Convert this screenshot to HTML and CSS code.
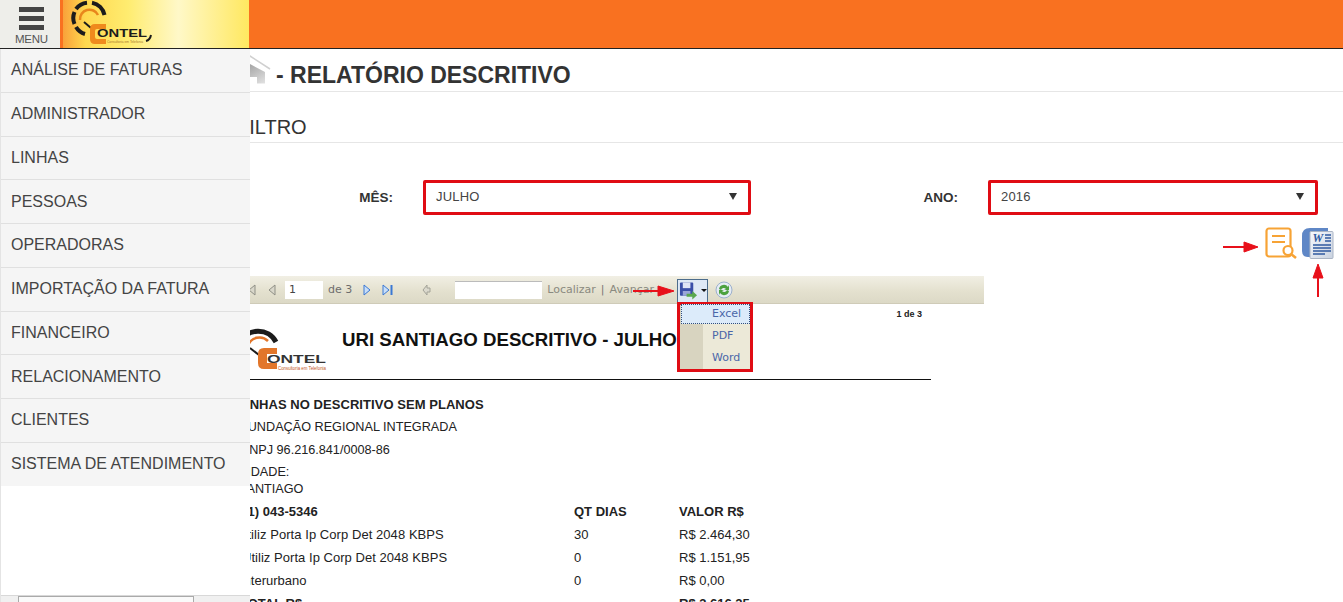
FILE: index.html
```html
<!DOCTYPE html>
<html lang="pt-BR">
  <head>
    <meta charset="UTF-8" />
    <title>Relatório Descritivo</title>
    <link rel="stylesheet" href="styles.css">
  </head>
  <body>
    <header class="topo">
      <div class="menu-btn">
        <span class="barra"></span>
        <span class="barra"></span>
        <span class="barra"></span>
        <small>MENU</small>
      </div>
      <div class="marca">
        <svg width="120" height="48" viewBox="0 0 120 48">
          <g fill="none" stroke="#1c1c1c" stroke-width="4">
            <path d="M11.500 24A15.500 15.500 0 0 1 11.500 12"/>
            <path d="M13 9A15.500 15.500 0 0 1 24 2.700"/>
            <path d="M29 2.700A15.500 15.500 0 0 1 41.500 15"/>
            <path d="M13 27A15.500 15.500 0 0 0 22 34"/>
          </g>
          <path d="M17 20A9.500 9.500 0 0 1 35 15" fill="none" stroke="#e8861c" stroke-width="2.500"/>
          <path d="M21 22l7 6" stroke="#1c1c1c" stroke-width="2"/>
          <path d="M32 24h11v5h-9q-2 0-2 2v6q0 2 2 2h9v5H32q-5 0-5-5V29q0-5 5-5z" fill="#ef8a1d"/>
          <text x="34" y="37" class="marca-txt" textLength="50" lengthAdjust="spacingAndGlyphs">ONTEL</text>
          <text x="44" y="43" class="marca-sub" textLength="36" lengthAdjust="spacingAndGlyphs">Consultoria em Telefonia</text>
          <path d="M88 35q-1 5-5 6" fill="none" stroke="#1c1c1c" stroke-width="2"/>
        </svg>
      </div>
    </header>

    <nav class="lateral">
      <a class="lateral-item">ANÁLISE DE FATURAS</a>
      <a class="lateral-item">ADMINISTRADOR</a>
      <a class="lateral-item">LINHAS</a>
      <a class="lateral-item">PESSOAS</a>
      <a class="lateral-item">OPERADORAS</a>
      <a class="lateral-item">IMPORTAÇÃO DA FATURA</a>
      <a class="lateral-item">FINANCEIRO</a>
      <a class="lateral-item">RELACIONAMENTO</a>
      <a class="lateral-item">CLIENTES</a>
      <a class="lateral-item">SISTEMA DE ATENDIMENTO</a>
      <div class="rolagem"><span class="rolagem-thumb"></span></div>
    </nav>

    <main class="conteudo">
      <h1 class="titulo">
        <svg width="46" height="34" viewBox="0 0 46 34">
          <defs>
            <linearGradient id="casa" x1="0" y1="0" x2="1" y2="1">
              <stop offset="0" stop-color="#8f8f8f"/>
              <stop offset="1" stop-color="#e2e2e2"/>
            </linearGradient>
          </defs>
          <path d="M3 22L24 3l20 13" fill="none" stroke="#d0d0d0" stroke-width="1.500"/>
          <path d="M8 22L24 11l15 8v11.500H31V24H20v6.500H8z" fill="url(#casa)"/>
        </svg>
        <span>- RELATÓRIO DESCRITIVO</span>
      </h1>
      <h2 class="subtitulo">FILTRO</h2>

      <section class="filtros">
        <label class="filtro-label filtro-label-mes">MÊS:</label>
        <div class="campo campo-mes"><span class="campo-valor">JULHO</span><i class="seta"></i></div>
        <label class="filtro-label filtro-label-ano">ANO:</label>
        <div class="campo campo-ano"><span class="campo-valor">2016</span><i class="seta"></i></div>
      </section>

      <div class="acoes">
        <svg width="32" height="32" viewBox="0 0 32 32">
          <rect x="1.500" y="1.500" width="24" height="28" rx="2.500" fill="none" stroke="#f7a335" stroke-width="2.200"/>
          <path d="M7 9h13M7 15h13" stroke="#f7a335" stroke-width="2.200"/>
          <circle cx="23" cy="23.500" r="4.500" fill="#fff" stroke="#f7a335" stroke-width="2.200"/>
          <path d="M26 27l5 4" stroke="#f7a335" stroke-width="2.600"/>
        </svg>
        <svg width="33" height="33" viewBox="0 0 33 33">
          <defs>
            <linearGradient id="folha" x1="0" y1="0" x2="1" y2="1">
              <stop offset="0" stop-color="#f7f9fd"/>
              <stop offset="1" stop-color="#c9d2e0"/>
            </linearGradient>
          </defs>
          <path d="M1 24V9Q1 1 9 1h18v4H12v25H7Q1 30 1 24z" fill="#5f87c6"/>
          <rect x="9" y="4.500" width="23" height="27" rx="1" fill="url(#folha)" stroke="#aab4c4"/>
          <text x="11.500" y="15" class="word-w">W</text>
          <path d="M24 8h6M24 11h6M24 14h6M12 18h18M12 21h18M12 24h18M12 27h12" stroke="#2f5aa0" stroke-width="1.300"/>
        </svg>
      </div>

      <section class="visor">
        <div class="barra-rel">
          <svg class="nav nav-1" width="8" height="12" viewBox="0 0 8 12"><path d="M7 1L1 6l6 5z" fill="#d9d7ca" stroke="#8f8f86"/></svg>
          <svg class="nav nav-2" width="8" height="12" viewBox="0 0 8 12"><path d="M7 1L1 6l6 5z" fill="#d9d7ca" stroke="#8f8f86"/></svg>
          <span class="pag-input">1</span>
          <span class="de">de 3</span>
          <svg class="nav" width="8" height="12" viewBox="0 0 8 12"><path d="M1 1l6 5-6 5z" fill="#c8def8" stroke="#3a78d4"/></svg>
          <svg class="nav nav-fim" width="12" height="12" viewBox="0 0 12 12">
            <path d="M1 1l6 5-6 5z" fill="#c8def8" stroke="#3a78d4"/>
            <path d="M9.500 1v10" stroke="#3a78d4" stroke-width="2"/>
          </svg>
          <svg class="nav nav-voltar" width="9" height="12" viewBox="0 0 9 12"><path d="M5 1L1 6l4 5V8h3V4H5z" fill="#dbd9cd" stroke="#a3a398"/></svg>
          <span class="busca"></span>
          <span class="link">Localizar</span>
          <span class="sep">|</span>
          <span class="link">Avançar</span>
          <span class="salvar">
            <svg width="20" height="20" viewBox="0 0 20 20">
              <rect x="1" y="1" width="14" height="14" rx="1" fill="#3b4fa8"/>
              <rect x="4" y="1" width="8" height="6" fill="#dfe4f5"/>
              <rect x="4" y="10" width="8" height="5" fill="#9aa6d8"/>
              <path d="M8 13h6v-3l5 4.500-5 4.500v-3H8z" fill="#5aa84e"/>
            </svg>
            <i class="caret"></i>
          </span>
          <svg class="atualizar" width="18" height="18" viewBox="0 0 18 18">
            <circle cx="9" cy="9" r="8" fill="#e6ecf4" stroke="#9cb0cc"/>
            <path d="M4 8a5 5 0 0 1 9-2l1-2v5H9l2-1a3 3 0 0 0-5 1z" fill="#4da23f"/>
            <path d="M14 10a5 5 0 0 1-9 2l-1 2V9h5l-2 1a3 3 0 0 0 5-1z" fill="#4da23f"/>
          </svg>
        </div>

        <div class="pagina">
          <span class="pagina-num">1 de 3</span>
          <div class="rel-topo">
            <svg class="rel-logo" width="88" height="50" viewBox="0 0 88 50">
              <g fill="none" stroke="#1c1c1c" stroke-width="5">
                <path d="M0 19A20 20 0 0 1 36 18"/>
                <path d="M0 30A20 20 0 0 0 6 41"/>
              </g>
              <path d="M8 22A12 12 0 0 1 28 17" fill="none" stroke="#e2762a" stroke-width="2.500"/>
              <path d="M10 24l9 7" stroke="#1c1c1c" stroke-width="2"/>
              <path d="M24 24h13v6H27v9h10v6H24q-6 0-6-6V30q0-6 6-6z" fill="#e2762a"/>
              <text x="27" y="39" class="rel-logo-txt" textLength="59" lengthAdjust="spacingAndGlyphs">ONTEL</text>
              <text x="38" y="45.500" class="rel-logo-sub" textLength="48" lengthAdjust="spacingAndGlyphs">Consultoria em Telefonia</text>
            </svg>
            <h3 class="rel-titulo">URI SANTIAGO DESCRITIVO - JULHO</h3>
          </div>

          <div class="rel-linha rel-negrito rel-l1">LINHAS NO DESCRITIVO SEM PLANOS</div>
          <div class="rel-linha">FUNDAÇÃO REGIONAL INTEGRADA</div>
          <div class="rel-linha">CNPJ 96.216.841/0008-86</div>
          <div class="rel-cidade">CIDADE:<br>SANTIAGO</div>

          <div class="rel-grade rel-negrito rel-cab"><span class="rel-recuo">(41) 043-5346</span><span>QT DIAS</span><span>VALOR R$</span></div>
          <div class="rel-grade"><span class="rel-item-a">Utiliz Porta Ip Corp Det 2048 KBPS</span><span>30</span><span>R$ 2.464,30</span></div>
          <div class="rel-grade"><span class="rel-item-b">Utiliz Porta Ip Corp Det 2048 KBPS</span><span>0</span><span>R$ 1.151,95</span></div>
          <div class="rel-grade"><span>Interurbano</span><span>0</span><span>R$ 0,00</span></div>
          <div class="rel-grade rel-negrito"><span>TOTAL R$</span><span></span><span>R$ 3.616,25</span></div>
        </div>
      </section>
    </main>

    <!-- menu de exportacao aberto -->
    <ul class="exportar">
      <li class="exportar-item exportar-ativo">Excel</li>
      <li class="exportar-item">PDF</li>
      <li class="exportar-item">Word</li>
    </ul>

    <svg class="anotacoes" width="1343" height="602" viewBox="0 0 1343 602">
      <g fill="#e8101a" stroke="#e8101a">
        <path d="M1223 247h22" stroke-width="2"/>
        <path d="M1244 242l14 5-14 5z"/>
        <path d="M1318 297v-20" stroke-width="2"/>
        <path d="M1313 278l5-14 5 14z"/>
        <path d="M633 291h28" stroke-width="2"/>
        <path d="M658 286l16 5-16 5z"/>
      </g>
    </svg>
  </body>
</html>
```

FILE: styles.css
```css
html,
body {
  margin: 0;
  height: 602px;
  overflow: hidden;
}

body {
  position: relative;
  font-family: "Liberation Sans", Arial, sans-serif;
  color: #333;
  background: #fff;
}

/* topo */
.topo {
  display: flex;
  height: 48px;
  background: #f97120;
  border-bottom: 1px solid #222;
}

.menu-btn {
  width: 60px;
  padding: 7px 0 0 19px;
  box-sizing: border-box;
  background: #eeeeea;
}

.barra {
  display: block;
  width: 25px;
  height: 5px;
  margin-bottom: 4px;
  background: #444;
}

.menu-btn small {
  display: block;
  margin: 3px 0 0 -4px;
  font-size: 11.500px;
  line-height: 11px;
  letter-spacing: -0.3px;
  color: #555;
}

.marca {
  width: 186px;
  margin-left: 3px;
  background: linear-gradient(90deg, #f9a13a 0, #ffd84f 12%, #ffec70 35%, #fff8c8 62%, #ffe860 100%);
}

.marca svg {
  display: block;
}

.marca-txt {
  font: bold 10px "Liberation Sans", sans-serif;
  fill: #1c1c1c;
}

.marca-sub {
  font: 4px "Liberation Sans", sans-serif;
  fill: #a8782c;
}

/* menu lateral */
.lateral {
  position: absolute;
  top: 49px;
  left: 0;
  bottom: 0;
  width: 250px;
  box-sizing: border-box;
  background: #fff;
  border-left: 1px solid #e4e4e4;
  z-index: 2;
}

.lateral-item {
  display: flex;
  align-items: center;
  height: 42.760px;
  padding-left: 10px;
  background: #f5f5f5;
  border-bottom: 1px solid #e0e0e0;
  font-size: 16px;
  color: #444;
}

.lateral-item:last-of-type {
  border-bottom: none;
}

.rolagem {
  position: absolute;
  left: 0;
  right: 0;
  bottom: 0;
  height: 6px;
  background: #f0f0f0;
  border-top: 1px solid #d8d8d8;
}

.rolagem-thumb {
  display: block;
  width: 176px;
  height: 6px;
  margin-left: 17px;
  box-sizing: border-box;
  background: #fafafa;
  border: 1px solid #aaa;
  border-bottom: none;
}

/* conteudo */
.titulo {
  display: flex;
  align-items: center;
  gap: 4px;
  height: 43px;
  margin: 0;
  padding: 11px 0 0 226px;
  box-sizing: border-box;
  border-bottom: 1px solid #e6e6e6;
  font-size: 23px;
  line-height: 31px;
  color: #333;
}

.titulo svg {
  flex: none;
  margin-top: -12px;
}

.subtitulo {
  height: 51px;
  margin: 0;
  padding-left: 237px;
  box-sizing: border-box;
  border-bottom: 1px solid #e6e6e6;
  font-size: 20px;
  font-weight: normal;
  line-height: 71px;
  overflow: hidden;
}

.filtros {
  display: flex;
  align-items: center;
  margin-top: 37px;
  padding-left: 225px;
}

.filtro-label {
  font-size: 13.500px;
  font-weight: bold;
  text-align: right;
}

.filtro-label-mes {
  width: 168px;
}

.filtro-label-ano {
  width: 207px;
}

.campo {
  display: flex;
  align-items: center;
  justify-content: space-between;
  height: 35px;
  box-sizing: border-box;
  padding: 0 11px 0 10px;
  border: 3px solid #e00c14;
  border-radius: 2px;
  font-size: 13px;
  letter-spacing: 0.2px;
  line-height: 27px;
  color: #444;
}

.campo-valor {
  margin-top: -2px;
}

.campo-mes {
  width: 328px;
  margin-left: 30px;
}

.campo-ano {
  width: 330px;
  margin-left: 30px;
}

.seta {
  width: 0;
  height: 0;
  margin-top: -2px;
  border-left: 4px solid transparent;
  border-right: 4px solid transparent;
  border-top: 7px solid #333;
}

.acoes {
  display: flex;
  justify-content: flex-end;
  gap: 4px;
  height: 49px;
  margin-top: 12px;
  padding-right: 9px;
  box-sizing: border-box;
}

/* visor do relatorio */
.visor {
  width: 759px;
  margin-left: 225px;
}

.barra-rel {
  display: flex;
  align-items: center;
  height: 28px;
  box-sizing: border-box;
  background: linear-gradient(#f1efe4, #e4e1cf 55%, #dcd9c6);
  border-bottom: 1px solid #cfcbb8;
  font: 11px "DejaVu Sans", Verdana, sans-serif;
  color: #6d6d6d;
}

.nav {
  flex: none;
}

.nav-1 {
  margin-left: 23px;
}

.nav-2 {
  margin-left: 12px;
}

.nav-fim {
  margin-left: 11px;
}

.nav-voltar {
  margin-left: 28px;
}

.pag-input {
  width: 38px;
  height: 18px;
  margin-left: 9px;
  padding-left: 4px;
  box-sizing: border-box;
  background: #fff;
  color: #444;
  line-height: 18px;
}

.de {
  margin: 0 11px 0 5px;
}

.busca {
  width: 87px;
  height: 18px;
  margin: 0 5px 0 24px;
  box-sizing: border-box;
  background: #fff;
  border-top: 1px solid #bbb;
}

.link {
  color: #8a8a80;
}

.sep {
  margin: 0 5px;
  color: #777;
}

.salvar {
  display: flex;
  align-items: center;
  gap: 3px;
  width: 31px;
  height: 24px;
  margin-left: 23px;
  margin-top: 2px;
  box-sizing: border-box;
  padding-left: 1px;
  background: #dfe9f5;
  border: 1px solid #4d6d8c;
}

.caret {
  width: 0;
  height: 0;
  border-left: 3px solid transparent;
  border-right: 3px solid transparent;
  border-top: 3px solid #111;
}

.atualizar {
  margin-left: 7px;
}

.pagina {
  position: relative;
  width: 706px;
  padding-left: 15px;
  box-sizing: border-box;
  font-size: 12.670px;
  color: #222;
}

.pagina-num {
  position: absolute;
  top: 5px;
  right: 9px;
  font-size: 9px;
  font-weight: bold;
}

.rel-topo {
  display: flex;
  height: 75px;
  border-bottom: 1px solid #111;
}

.rel-logo {
  flex: none;
  margin-top: 20px;
}

.rel-logo-txt {
  font: bold 11px "Liberation Sans", sans-serif;
  fill: #333;
}

.rel-logo-sub {
  font: 4.500px "Liberation Sans", sans-serif;
  fill: #c4561c;
}

.rel-titulo {
  margin: 24px 0 0 14px;
  font-size: 18.670px;
  line-height: 24px;
  white-space: nowrap;
  color: #111;
}

.rel-linha {
  height: 23px;
  line-height: 23px;
}

.rel-negrito {
  font-size: 13px;
  font-weight: bold;
}

.rel-l1 {
  margin: 14px 0 0 -2px;
  height: 22px;
  letter-spacing: 0.05px;
  line-height: 22px;
}

.rel-cidade {
  margin: 2px 0 0 -2px;
  line-height: 17px;
}

.rel-grade {
  display: grid;
  grid-template-columns: 334px 105px 1fr;
  height: 23px;
  font-size: 13px;
  line-height: 23px;
}

.rel-cab {
  margin-top: 2px;
}

.rel-recuo {
  margin-left: -4px;
}

.rel-item-a {
  margin-left: -2px;
  letter-spacing: 0.06px;
}

.rel-item-b {
  padding-left: 2px;
  letter-spacing: 0.04px;
}

/* menu exportar */
.exportar {
  position: absolute;
  top: 302px;
  left: 677px;
  width: 76px;
  height: 70px;
  margin: 0;
  padding: 3px;
  box-sizing: border-box;
  list-style: none;
  background: linear-gradient(90deg, #d8d4c0 23px, #ece9d8 23px);
  border: 3px solid #e00c14;
  font: 11px "DejaVu Sans", Verdana, sans-serif;
  color: #4a66a8;
}

.exportar-item {
  height: 22px;
  padding-left: 29px;
  line-height: 22px;
}

.exportar-ativo {
  height: 20px;
  margin: -4px -3px 1px -2px;
  padding-left: 30px;
  box-sizing: border-box;
  background: #dcebfa;
  border: 1px dotted #34507c;
  line-height: 18px;
}

.word-w {
  font: italic bold 12px "Liberation Serif", serif;
  fill: #2f5aa0;
}

.anotacoes {
  position: absolute;
  top: 0;
  left: 0;
  pointer-events: none;
  z-index: 3;
}
```
